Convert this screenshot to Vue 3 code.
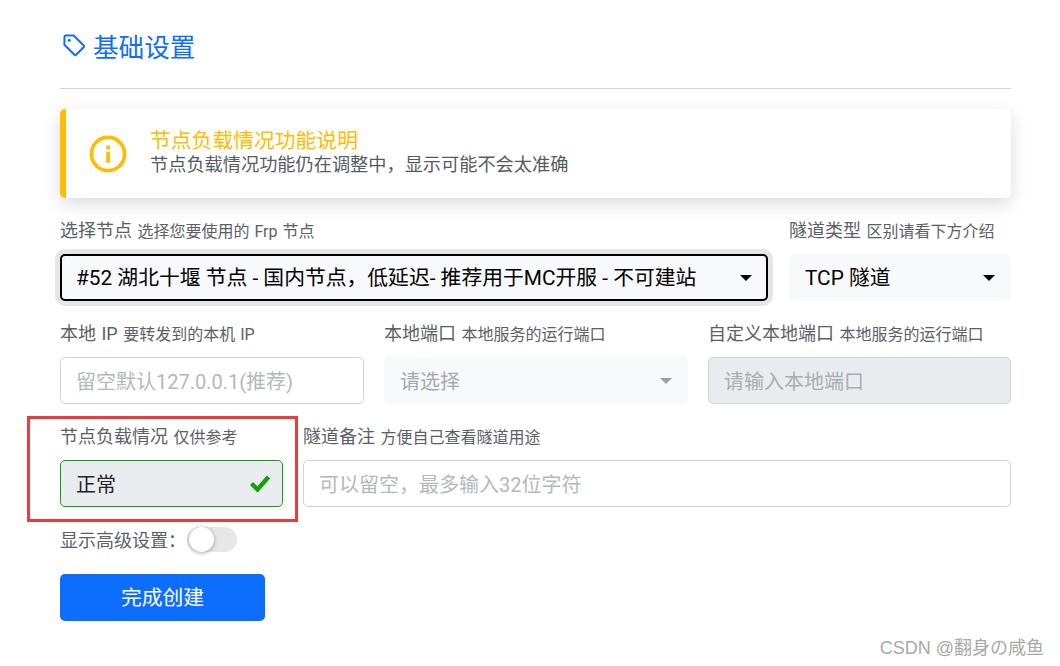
<script setup>
const FIELD_NOTE = '节点负载情况功能仍在调整中，显示可能不会太准确'
</script>

<template>
  <main class="page">
    <h2 class="title">
      <svg class="tag" viewBox="0 0 24 24" width="24" height="24" fill="none" stroke="#0d6efd" stroke-width="2" stroke-linejoin="round">
        <path d="M2.5 3.5a1 1 0 0 1 1-1h8.2l10 10a1.2 1.2 0 0 1 0 1.7l-7.6 7.6a1.2 1.2 0 0 1-1.7 0l-10-10z" />
        <circle cx="7.2" cy="7.2" r="1.5" fill="#0d6efd" stroke="none" />
      </svg>
      <span>基础设置</span>
    </h2>
    <hr class="rule" />

    <section class="alert">
      <svg class="info" viewBox="0 0 38 38" width="38" height="38">
        <circle cx="19" cy="19" r="16.6" fill="none" stroke="#ffbc00" stroke-width="3.6" />
        <rect x="17.2" y="10.5" width="3.8" height="3.8" fill="#ffbc00" />
        <rect x="17.2" y="16.8" width="3.8" height="11" fill="#ffbc00" />
      </svg>
      <div class="alert-text">
        <div class="alert-title">节点负载情况功能说明</div>
        <div class="alert-desc">{{ FIELD_NOTE }}</div>
      </div>
    </section>

    <div class="row row-one">
      <div class="field node">
        <label class="label">选择节点 <small>选择您要使用的 Frp 节点</small></label>
        <div class="control select focused">
          <span class="value">#52 湖北十堰 节点 - 国内节点，低延迟- 推荐用于MC开服 - 不可建站</span>
          <i class="caret"></i>
        </div>
      </div>
      <div class="field type">
        <label class="label">隧道类型 <small>区别请看下方介绍</small></label>
        <div class="control select">
          <span class="value">TCP 隧道</span>
          <i class="caret"></i>
        </div>
      </div>
    </div>

    <div class="row row-two">
      <div class="field">
        <label class="label">本地 IP <small>要转发到的本机 IP</small></label>
        <div class="control input"><span class="placeholder">留空默认127.0.0.1(推荐)</span></div>
      </div>
      <div class="field">
        <label class="label">本地端口 <small>本地服务的运行端口</small></label>
        <div class="control select disabled">
          <span class="muted">请选择</span>
          <i class="caret grey"></i>
        </div>
      </div>
      <div class="field">
        <label class="label">自定义本地端口 <small>本地服务的运行端口</small></label>
        <div class="control input readonly"><span class="placeholder dark">请输入本地端口</span></div>
      </div>
    </div>

    <div class="row row-three">
      <div class="field load">
        <label class="label">节点负载情况 <small>仅供参考</small></label>
        <div class="control valid">
          <span class="plain">正常</span>
          <svg viewBox="0 0 22 18" width="22" height="18" class="check">
            <path d="M2.5 9.5l6 6L19.5 3" fill="none" stroke="#14a00b" stroke-width="4.4" />
          </svg>
        </div>
        <div class="callout"></div>
      </div>
      <div class="field note">
        <label class="label">隧道备注 <small>方便自己查看隧道用途</small></label>
        <div class="control input"><span class="placeholder">可以留空，最多输入32位字符</span></div>
      </div>
    </div>

    <div class="switch-row">
      <span>显示高级设置：</span>
      <span class="switch"><i class="knob"></i></span>
    </div>

    <button class="submit" type="button">完成创建</button>

    <div class="mark">CSDN @翻身の咸鱼</div>
  </main>
</template>

<style>
html, body { margin: 0; background: #fff; }
</style>

<style scoped>
.page {
  position: relative;
  box-sizing: border-box;
  width: 1060px;
  height: 666px;
  padding: 27px 49px 0 60px;
  overflow: hidden;
  font-family: Roboto, "Noto Sans CJK SC", sans-serif;
  color: #212529;
}
.title {
  display: flex;
  align-items: center;
  gap: 7px;
  margin: 0;
  height: 36px;
  font-size: 25.6px;
  font-weight: 400;
  color: #0d6efd;
}
.tag { margin-left: 2px; }
.rule { height: 1px; margin: 25px 0 20px; border: 0; background: #d4d4d4; }
.alert {
  display: flex;
  align-items: center;
  box-sizing: border-box;
  height: 89px;
  padding: 0 0 3px 23px;
  background: #fff;
  border-left: 6px solid #ffbc00;
  border-radius: 5px;
  box-shadow: 0 6px 18px rgba(0, 0, 0, .14);
}
.info { margin-top: 3px; }
.alert-text { margin-left: 23px; }
.alert-title { margin-top: 2px; font-size: 20.8px; line-height: 23px; color: #ffbc00; }
.alert-desc { font-size: 18.2px; line-height: 23px; color: #555b61; }
.row { display: grid; gap: 20px; }
.row-one { grid-template-columns: 708px 222px; gap: 21px; margin-top: 20px; }
.row-two { grid-template-columns: 304px 304px 303px; margin-top: 20px; }
.row-three { grid-template-columns: 223px 708px; margin-top: 20px; }
.field { min-width: 0; position: relative; }
.label {
  display: block;
  height: 25px;
  line-height: 25px;
  margin-bottom: 11px;
  font-size: 18px;
  word-spacing: 1px;
  white-space: nowrap;
  color: #5b6066;
}
.label small { font-size: 16px; }
.control {
  display: flex;
  align-items: center;
  box-sizing: border-box;
  height: 47px;
  padding: 0 15px;
  font-size: 20px;
  border-radius: 5px;
  border: 1px solid transparent;
  white-space: nowrap;
}
.select { justify-content: space-between; background: #f8f9fa; color: #000; }
.focused { border: 2px solid #000; box-shadow: 0 0 0 5px #e6e6e6; padding: 0 14px; }
.value { margin-bottom: 4px; color: #000; font-size: 20.8px; }
.plain { color: #212529; }
.caret {
  width: 0; height: 0;
  border-left: 6px solid transparent;
  border-right: 6px solid transparent;
  border-top: 6px solid #000;
}
.caret.grey { border-top-color: #9c9ea0; }
.input { background: #fff; border-color: #ced4da; }
.placeholder { color: #b4b8bc; }
.placeholder.dark { color: #a9adb1; }
.muted { color: #a6a9ac; }
.readonly { background: #e9ecef; }
.valid {
  justify-content: space-between;
  background: #e9ecef;
  border-color: #14a00b;
  padding-right: 11px;
}
.check { margin-top: -2px; }
.callout {
  position: absolute;
  left: -33px;
  right: -15px;
  top: -8px;
  box-sizing: border-box;
  height: 106px;
  border: 3px solid #f03a3a;
  pointer-events: none;
}
.switch-row {
  display: flex;
  align-items: center;
  height: 26px;
  margin-top: 19px;
  font-size: 18px;
  color: #5b6066;
}
.switch-row > span:first-child { width: 127px; white-space: nowrap; }
.switch {
  position: relative;
  display: block;
  width: 50px;
  height: 25px;
  border-radius: 13px;
  background: #e7e7e7;
}
.knob {
  position: absolute;
  left: 2px;
  top: 0;
  width: 25px;
  height: 25px;
  border-radius: 50%;
  background: #fff;
  box-shadow: 0 1px 4px rgba(0, 0, 0, .35);
}
.submit {
  display: block;
  box-sizing: border-box;
  width: 205px;
  height: 47px;
  margin-top: 22px;
  padding: 0 0 4px;
  border: 0;
  border-radius: 5px;
  background: #0d6efd;
  color: #fff;
  font: 20.8px Roboto, "Noto Sans CJK SC", sans-serif;
}
.mark {
  position: absolute;
  right: 16px;
  bottom: 7px;
  font: 18px "Liberation Sans", "Noto Sans CJK JP", sans-serif;
  color: #a8a8a8;
}
</style>
